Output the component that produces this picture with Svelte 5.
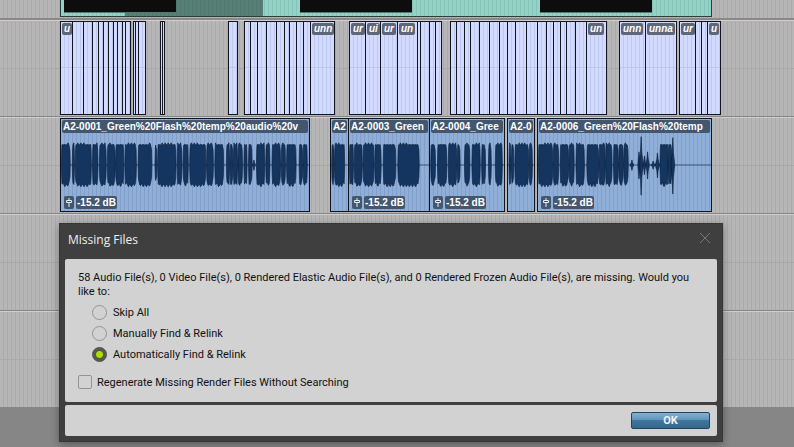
<script lang="ts">
  type Burst = [number, number, number?];

  interface AudioClip {
    start: number;
    width: number;
    name: string;
    gain?: string;
    bursts: Burst[];
  }

  // edges are the cut points of each run of clips, in timeline pixels
  const runs: { edges: number[]; labels?: Record<number, string> }[] = [
    { edges: [60, 72, 83, 92, 98, 103, 108, 113, 117, 122, 125, 130], labels: { 0: 'u' } },
    { edges: [133, 135, 138, 145] },
    { edges: [160, 162, 164] },
    { edges: [228, 237] },
    { edges: [244, 250, 257, 266, 276, 284, 289, 296, 303, 310, 334], labels: { 9: 'unn' } },
    { edges: [349, 365, 380, 397, 417, 420, 429, 435, 441], labels: { 0: 'ur', 1: 'ui', 2: 'ur', 3: 'un' } },
    {
      edges: [450, 456, 464, 470, 479, 489, 499, 507, 515, 526, 537, 546, 553, 560, 566, 575, 586, 606],
      labels: { 16: 'un' }
    },
    { edges: [619, 645, 676], labels: { 0: 'unn', 1: 'unna' } },
    { edges: [679, 695, 701, 707, 720], labels: { 0: 'ur', 3: 'u' } }
  ];

  const renderClips = runs.flatMap((run) =>
    run.edges.slice(0, -1).map((edge, i) => ({
      start: edge,
      width: run.edges[i + 1] - edge + 1,
      label: run.labels?.[i]
    }))
  );

  const frames = [64, 300, 540];

  // bursts: [from, to, level], three units to the pixel
  const audioClips: AudioClip[] = [
    {
      start: 60,
      width: 250,
      name: 'A2-0001_Green%20Flash%20temp%20audio%20v',
      gain: '-15.2 dB',
      bursts: [
        [1, 28], [34, 41], [43, 92], [95, 112], [116, 137], [140, 164], [165, 190], [193, 228],
        [233, 275], [284, 290], [292, 348], [351, 366], [369, 385], [389, 438], [440, 461],
        [465, 492], [500, 510], [511, 520], [521, 534], [535, 549], [553, 563], [567, 578],
        [579, 588, 0.25], [591, 616], [619, 632], [638, 664], [666, 679], [682, 711],
        [720, 731], [732, 745]
      ]
    },
    { start: 330, width: 19, name: 'A2', bursts: [[2, 11], [12, 46]] },
    {
      start: 348,
      width: 82,
      name: 'A2-0003_Green',
      gain: '-15.2 dB',
      bursts: [[1, 14], [16, 41], [43, 77], [79, 99], [105, 144], [150, 216]]
    },
    {
      start: 429,
      width: 76,
      name: 'A2-0004_Gree',
      gain: '-15.2 dB',
      bursts: [[2, 17], [23, 52], [56, 83], [84, 93], [106, 123], [129, 155], [159, 171], [180, 189], [201, 223]]
    },
    { start: 507, width: 28, name: 'A2-0', bursts: [[3, 10], [11, 19], [22, 67], [68, 79]] },
    {
      start: 537,
      width: 175,
      name: 'A2-0006_Green%20Flash%20temp',
      gain: '-15.2 dB',
      bursts: [
        [1, 45], [46, 63], [67, 93], [94, 110], [115, 141], [148, 184], [185, 204], [205, 225],
        [229, 244], [245, 259], [260, 274], [279, 291, 0.25], [303, 310, 0.65], [307, 319, 1.4],
        [318, 328, 0.45], [327, 338, 0.65], [342, 357, 0.2], [356, 369, 0.6], [370, 395],
        [395, 406], [403, 415, 1.35]
      ]
    }
  ];

  function wavePath(bursts: Burst[]): string {
    return bursts
      .map(([from, to, level = 1]) => {
        // anything off full level is a single spike
        if (level !== 1) {
          const mid = (from + to) / 2;
          return `M${from},141 L${mid - 2},${141 - 28 * level} ${mid},${141 - 62 * level} ${mid + 2},${141 - 28 * level} ${to},141 ${mid + 2},${141 + 28 * level} ${mid},${141 + 66 * level} ${mid - 2},${141 + 28 * level}Z`;
        }
        const top: string[] = [];
        const bottom: string[] = [];
        for (let x = from + 2; x <= to - 2; x += 3) {
          const n = Math.abs(Math.sin(x * 12.9 + from * 4.1));
          top.push(`${x},${80 - (n > 0.97 ? 7 : n * 2)}`);
          const shoulder = Math.min(x - from, to - x, 10);
          bottom.unshift(`${x},${186 + n * 13 + shoulder * 0.9}`);
        }
        return `M${from},141 L${from + 1},95 ${top.join(' ')} ${to - 1},95 ${to},141 ${to - 1},178 ${bottom.join(' ')} ${from + 1},178Z`;
      })
      .join(' ');
  }

  let action = $state('auto');
  let regenerate = $state(false);

  const actions = [
    { value: 'skip', text: 'Skip All' },
    { value: 'manual', text: 'Manually Find & Relink' },
    { value: 'auto', text: 'Automatically Find & Relink' }
  ];
</script>

<main class="session">
  <div class="timeline">
    <div class="track video">
      <div class="video-clip">
        <div class="selection"></div>
      </div>
      {#each frames as x}
        <div class="frame" style="left: {x}px"></div>
      {/each}
    </div>

    <div class="track">
      {#each renderClips as clip}
        <div class="clip render" style="left: {clip.start}px; width: {clip.width}px">
          {#if clip.label}
            <span class="tag">{clip.label}</span>
          {/if}
        </div>
      {/each}
    </div>

    <div class="track">
      {#each audioClips as clip}
        <div class="clip audio" style="left: {clip.start}px; width: {clip.width}px">
          <svg class="wave" viewBox="0 0 {clip.width * 3} 282" preserveAspectRatio="none" aria-hidden="true">
            <path d="M0,141 H{clip.width * 3}" />
            <path d={wavePath(clip.bursts)} />
          </svg>
          <span class="name">{clip.name}</span>
          {#if clip.gain}
            <div class="gain">
              <svg class="fader" viewBox="0 0 10 13" aria-hidden="true">
                <path d="M5 2V4M5 7V11M2.500 4.500H7.500V6.500H2.500Z" />
              </svg>
              <span>{clip.gain}</span>
            </div>
          {/if}
        </div>
      {/each}
    </div>

    <div class="track"></div>
    <div class="track"></div>
  </div>

  <div class="dialog" role="dialog" aria-labelledby="dialog-title">
    <header>
      <h1 id="dialog-title">Missing Files</h1>
      <button class="close" type="button" aria-label="Close">
        <svg viewBox="0 0 12 12" aria-hidden="true"><path d="M1 1L11 11M11 1L1 11" /></svg>
      </button>
    </header>

    <div class="panel">
      <p>
        58 Audio File(s), 0 Video File(s), 0 Rendered Elastic Audio File(s), and 0 Rendered Frozen
        Audio File(s), are missing. Would you like to:
      </p>
      <div class="options" role="radiogroup" aria-label="Missing file action">
        {#each actions as item}
          <label>
            <input type="radio" name="action" value={item.value} bind:group={action} />
            {item.text}
          </label>
        {/each}
      </div>
      <label class="regenerate">
        <input type="checkbox" bind:checked={regenerate} />
        Regenerate Missing Render Files Without Searching
      </label>
    </div>

    <footer>
      <button class="ok" type="button">OK</button>
    </footer>
  </div>
</main>

<style>
  :global(body) {
    margin: 0;
    background: #868686;
  }

  .session {
    position: relative;
    min-height: 100vh;
    overflow: hidden;
    font-family: "Liberation Sans", Arial, sans-serif;
    font-size: 11px;
    color: #111;
  }

  .track {
    position: relative;
    box-sizing: border-box;
    height: 97px;
    border-top: 1px solid #cfcfcf;
    border-bottom: 1px solid #858585;
    background:
      linear-gradient(#a8a8a8, #a8a8a8) 0 47px / 100% 1px no-repeat,
      repeating-linear-gradient(90deg, #b6b6b6 0 3px, #aaaaaa 3px 4px);
  }

  .track:last-child {
    height: 96px;
    border-bottom: none;
  }

  .track.video {
    height: 20px;
    border-top: none;
    border-bottom: 2px solid #8c8888;
    background: repeating-linear-gradient(90deg, #b6b6b6 0 3px, #aaaaaa 3px 4px);
  }

  .video-clip {
    position: absolute;
    left: 60px;
    top: 0;
    box-sizing: border-box;
    width: 652px;
    height: 17px;
    border: 1px solid #27403b;
    border-top: none;
    background: repeating-linear-gradient(90deg, #93d2c6 0 3px, #86c3b6 3px 4px);
  }

  .selection {
    width: 138px;
    height: 16px;
    margin-left: 64px;
    background: rgba(25, 45, 38, 0.5);
  }

  .frame {
    position: absolute;
    top: 0;
    width: 112px;
    height: 12px;
    background: #0d0d0d;
    border-bottom: 1px solid #54796f;
  }

  .clip {
    position: absolute;
    top: 0;
    box-sizing: border-box;
    height: 94px;
    border: 1px solid #11151f;
    overflow: hidden;
  }

  .clip.render {
    background:
      linear-gradient(#bfc9e4, #bfc9e4) 0 45px / 100% 1px no-repeat,
      repeating-linear-gradient(90deg, #d2dbff 0 3px, #bdc8ee 3px 4px);
  }

  .clip.audio {
    background: repeating-linear-gradient(90deg, #8fafd9 0 3px, #819fc8 3px 4px);
  }

  .tag {
    display: block;
    width: fit-content;
    margin: 1px;
    padding: 0 2px;
    border-radius: 2px;
    background: #5f6678;
    color: #fff;
    font-size: 10px;
    font-style: italic;
    font-weight: bold;
    line-height: 12px;
  }

  .wave {
    position: absolute;
    inset: 0;
    width: 100%;
    height: 100%;
  }

  .wave path {
    fill: #14355f;
    stroke: #0c1f3b;
    stroke-width: 2;
  }

  .name {
    position: relative;
    display: block;
    margin: 1px;
    padding-left: 1px;
    border-radius: 2px;
    overflow: hidden;
    background: #43566e;
    color: #fff;
    font-size: 10px;
    font-weight: bold;
    line-height: 13px;
    white-space: nowrap;
  }

  .gain {
    position: absolute;
    left: 3px;
    bottom: 2px;
    display: flex;
    gap: 2px;
    color: #fff;
    font-size: 10px;
    font-weight: bold;
    line-height: 13px;
    white-space: nowrap;
  }

  .gain span {
    padding: 0 1px;
    border-radius: 2px;
    background: #43566e;
  }

  .fader {
    width: 10px;
    height: 13px;
    border-radius: 2px;
    background: #43566e;
    fill: none;
    stroke: #e6ecf4;
    stroke-width: 1;
  }

  .dialog {
    position: absolute;
    top: 223px;
    left: 59px;
    right: 71px;
    box-sizing: border-box;
    padding: 0 5px 5px;
    border: 1px solid #363636;
    background: #3f3f3f;
    box-shadow: 0 2px 8px rgba(0, 0, 0, 0.35);
    font-family: Roboto, "Liberation Sans", sans-serif;
  }

  header {
    display: flex;
    align-items: center;
    justify-content: space-between;
    height: 35px;
    padding: 0 6px 0 3px;
  }

  h1 {
    margin: 0;
    padding-bottom: 4px;
    color: #f0f0f0;
    font-family: "Open Sans", "Noto Sans", sans-serif;
    font-size: 12px;
    font-weight: 400;
    line-height: 16px;
  }

  .close {
    width: 12px;
    height: 12px;
    margin-bottom: 8px;
    padding: 0;
    border: none;
    background: none;
  }

  .close svg {
    display: block;
    fill: none;
    stroke: #777;
    stroke-width: 1;
  }

  .panel,
  footer {
    border-radius: 2px;
    background: #d2d2d2;
  }

  .panel {
    padding: 12px 13px 10px;
  }

  p {
    margin: 0 0 3px;
    line-height: 14px;
  }

  .options {
    padding-left: 14px;
  }

  label {
    display: flex;
    align-items: center;
    gap: 6px;
    height: 21px;
  }

  .regenerate {
    gap: 5px;
    height: 20px;
    margin-top: 7px;
  }

  input {
    appearance: none;
    box-sizing: border-box;
    width: 15px;
    height: 15px;
    margin: 0;
    border: 1px solid #949494;
    border-radius: 50%;
  }

  input[type="radio"]:checked {
    border-color: #4c4c4c;
    background: radial-gradient(circle, #a9e000 0 3px, #4f5a36 4px, #585858 5px);
  }

  input[type="checkbox"] {
    width: 14px;
    height: 14px;
    border-radius: 2px;
  }

  input[type="checkbox"]:checked {
    background: #a9e000;
  }

  footer {
    display: flex;
    justify-content: flex-end;
    margin-top: 3px;
    padding: 7px;
  }

  .ok {
    width: 79px;
    height: 17px;
    padding: 0;
    border: 1px solid #22455f;
    border-radius: 2px;
    background: linear-gradient(#84b0d0, #5d93b9 50%, #3e779f 50%, #37678a);
    color: #f2f2f2;
    font-family: inherit;
    font-size: 11px;
    font-weight: bold;
    line-height: 15px;
  }
</style>
